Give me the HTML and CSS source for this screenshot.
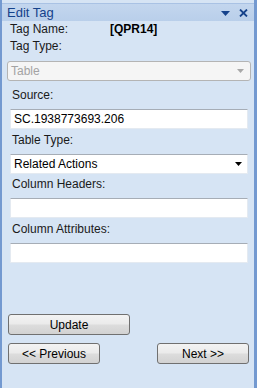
FILE: index.html
```html
<!DOCTYPE html>
<html lang="en">
<head>
  <meta charset="UTF-8" />
  <meta name="viewport" content="width=device-width, initial-scale=1.0" />
  <title>Edit Tag</title>
  <link rel="stylesheet" href="styles.css">
</head>
<body>
  <div class="pane">
    <div class="titlebar">
      <span class="title">Edit Tag</span>
      <span class="title-icons">
        <svg class="menu-icon" width="9" height="5" viewBox="0 0 9 5"><polygon points="0,0 9,0 4.5,5" fill="#15428b"/></svg>
        <svg class="close-icon" width="9" height="8" viewBox="0 0 9 8"><path d="M1 0.5 L8 7.5 M8 0.5 L1 7.5" stroke="#15428b" stroke-width="1.8"/></svg>
      </span>
    </div>

    <div class="info-row">
      <span class="info-label">Tag Name:</span>
      <span class="info-value">[QPR14]</span>
    </div>
    <div class="info-row">
      <span class="info-label">Tag Type:</span>
    </div>

    <div class="combo disabled">
      <span>Table</span>
      <svg width="7" height="4" viewBox="0 0 7 4"><polygon points="0,0 7,0 3.5,4" fill="#a8a8a8"/></svg>
    </div>

    <div class="label first">Source:</div>
    <div class="field">SC.1938773693.206</div>

    <div class="label">Table Type:</div>
    <div class="field combo-field">
      <span>Related Actions</span>
      <svg width="7" height="4" viewBox="0 0 7 4"><polygon points="0,0 7,0 3.5,4" fill="#000"/></svg>
    </div>

    <div class="label tight">Column Headers:</div>
    <div class="field"></div>

    <div class="label">Column Attributes:</div>
    <div class="field"></div>

    <button class="btn update">Update</button>
    <div class="nav">
      <button class="btn">&lt;&lt; Previous</button>
      <button class="btn">Next &gt;&gt;</button>
    </div>
  </div>
</body>
</html>
```

FILE: styles.css
```css
body {
  margin: 0;
  background-color: #d6e4f4;
  font-family: "Liberation Sans", Arial, sans-serif;
  font-size: 11px;
  color: #1a1a1a;
}

.pane {
  box-sizing: border-box;
  height: 388px;
  width: 257px;
  background-color: #d6e4f4;
  border-left: 2px solid #7399d0;
  border-right: 3px solid #7399d0;
  display: flex;
  flex-direction: column;
}

.titlebar {
  margin-top: 3px;
  height: 18px;
  display: flex;
  align-items: center;
  justify-content: space-between;
  padding: 0 6px 0 5px;
  background: linear-gradient(#c3d6ee, #b9cfea);
  border-top: 1px solid #a9c2e4;
  box-sizing: border-box;
}

.title {
  font-size: 13px;
  color: #15428b;
}

.title-icons {
  display: flex;
  align-items: center;
  gap: 9px;
}

.menu-icon {
  margin-top: 1px;
}

.info-row {
  height: 17px;
  line-height: 17px;
  padding-left: 8px;
  display: flex;
  font-size: 12px;
}

.info-label {
  width: 100px;
}

.info-value {
  font-weight: bold;
  font-size: 12px;
  color: #000;
}

.combo {
  box-sizing: border-box;
  margin: 6px 0 0 5px;
  width: 244px;
  height: 20px;
  border: 1px solid #b4b4b4;
  border-radius: 3px;
  background-color: #f5f5f5;
  display: flex;
  align-items: center;
  justify-content: space-between;
  padding: 0 6px 0 3px;
  font-size: 12px;
}

.combo.disabled {
  color: #a3a3a3;
}

.label {
  height: 17px;
  line-height: 17px;
  margin-top: 3px;
  padding-left: 10px;
  font-size: 12px;
}

.label.first {
  margin-top: 6px;
}

.label.tight {
  margin-top: 2px;
}

.field {
  box-sizing: border-box;
  margin: 5px 0 0 8px;
  width: 238px;
  height: 20px;
  background-color: #fff;
  border: 1px solid #e4eaf1;
  border-top-color: #a6adb6;
  padding: 0 3px;
  line-height: 18px;
  font-size: 12px;
  color: #000;
}

.combo-field {
  display: flex;
  align-items: center;
  justify-content: space-between;
  padding-right: 5px;
}

.btn {
  box-sizing: border-box;
  height: 21px;
  width: 92px;
  padding: 0;
  font-family: "Liberation Sans", Arial, sans-serif;
  font-size: 12px;
  color: #000;
  background: linear-gradient(#f3f3f3 0%, #ebebeb 45%, #dcdcdc 55%, #d2d2d2 100%);
  border: 1px solid #707070;
  border-radius: 3px;
  cursor: pointer;
}

.update {
  margin: 51px 0 0 6px;
  width: 122px;
}

.nav {
  margin-top: 8px;
  padding: 0 5px 0 6px;
  display: flex;
  justify-content: space-between;
}
```
